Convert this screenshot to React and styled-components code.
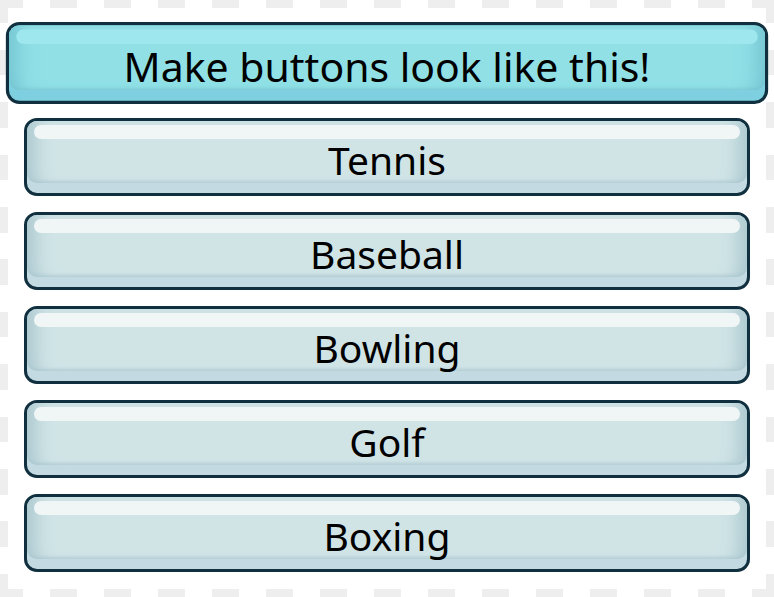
import styled, { createGlobalStyle, css } from "styled-components";

const sports = ["Tennis", "Baseball", "Bowling", "Golf", "Boxing"];

export default function App() {
    return (
        <>
            <GlobalStyle />
            <Page>
                <MenuButton $active>
                    <Face $active>Make buttons look like this!</Face>
                </MenuButton>
                {sports.map(name => (
                    <MenuButton key={name}>
                        <Face>{name}</Face>
                    </MenuButton>
                ))}
            </Page>
        </>
    );
}

const GlobalStyle = createGlobalStyle`
    html, body {
        margin: 0;
        padding: 0;
        background: #fff;
    }
    body {
        font-family: "Noto Sans", "Liberation Sans", sans-serif;
        color: #000;
    }
`;

const dashX = "repeating-linear-gradient(90deg, #eeeeee 0 23px, transparent 23px 50px, #eeeeee 50px 54px)";
const dashY = "repeating-linear-gradient(180deg, #eeeeee 0 23px, transparent 23px 49.8px, #eeeeee 49.8px 52.4px)";

// dashed frame drawn with gradients so the dash length matches
const Page = styled.div`
    box-sizing: border-box;
    height: 100vh;
    padding: 24px;
    background:
        ${dashX} 0 0 / 100% 8px no-repeat,
        ${dashX} 0 100% / 100% 8px no-repeat,
        ${dashY} 0 0 / 8px 100% no-repeat,
        ${dashY} 100% 0 / 8px 100% no-repeat,
        #fff;
    display: flex;
    flex-direction: column;
    gap: 16px;
`;

const MenuButton = styled.div`
    box-sizing: border-box;
    height: 78px;
    flex-shrink: 0;
    border: 3px solid #11303f;
    border-radius: 13px;
    background: ${props => props.$active ? "#7ed0e0" : "#c3dae3"};
    padding-bottom: 10px;
    overflow: hidden;
    cursor: pointer;
    ${props => props.$active && css`
        transform: scale(1.05);
        position: relative;
        z-index: 1;
    `}
`;

const Face = styled.div`
    position: relative;
    height: 100%;
    box-sizing: border-box;
    padding-top: 14px;
    display: flex;
    align-items: center;
    justify-content: center;
    font-size: 39px;
    border-radius: 0 0 10px 10px;
    background: ${props => props.$active ? "#90e0e6" : "#d0e4e6"};
    box-shadow: ${props => props.$active
        ? "inset 22px 0 18px -14px #74c4d2, inset -22px 0 18px -14px #74c4d2, inset 0 -3px 3px -1px #80ccd8"
        : "inset 22px 0 18px -14px #a9c6ce, inset -22px 0 18px -14px #a9c6ce, inset 0 -3px 3px -1px #b8d0d7"};

    &::before {
        content: "";
        position: absolute;
        top: 4px;
        left: 7px;
        right: 7px;
        height: 14px;
        border-radius: 7px;
        background: ${props => props.$active ? "#9ee7ef" : "#f0f5f5"};
    }
`;
